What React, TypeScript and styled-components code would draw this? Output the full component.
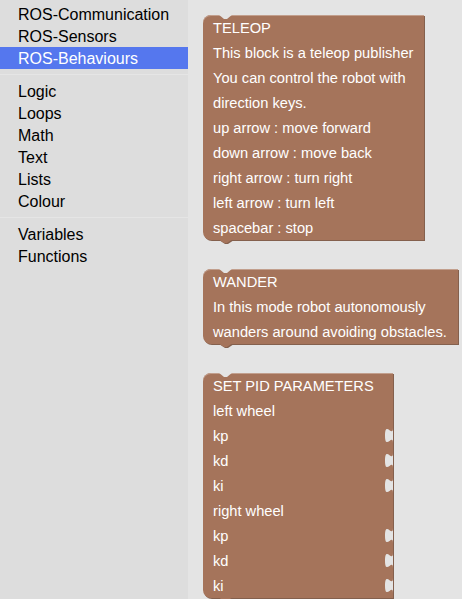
import React from 'react';
import styled, { createGlobalStyle } from 'styled-components';

const BLOCK = '#a5745b';
const BLOCK_DARK = '#84604d';
const BLOCK_LIGHT = '#c29f8d';
const FLYOUT = '#e4e4e4';

const GlobalStyle = createGlobalStyle`
  html, body {
    margin: 0;
    height: 100%;
    overflow: hidden;
  }
  body {
    font-family: 'Liberation Sans', Arial, sans-serif;
  }
  #root {
    height: 100%;
  }
`;

const Page = styled.div`
  display: flex;
  height: 100%;
`;

const Toolbox = styled.nav`
  flex: none;
  width: 188px;
  padding-top: 3px;
  box-sizing: border-box;
  background: #ddd;
`;

const Category = styled.div<{ $selected?: boolean }>`
  box-sizing: border-box;
  height: 22px;
  padding: 2px 0 0 18px;
  line-height: 20px;
  font-size: 16px;
  white-space: nowrap;
  color: ${(p) => (p.$selected ? '#fff' : '#000')};
  background: ${(p) => (p.$selected ? '#57e' : 'transparent')};
`;

const Separator = styled.div`
  height: 0;
  margin: 5px 0;
  border-bottom: 1px solid #e5e5e5;
`;

const Flyout = styled.main`
  flex: 1;
  display: flex;
  flex-direction: column;
  align-items: flex-start;
  gap: 29px;
  padding: 15px 0 0 15px;
  background: ${FLYOUT};
`;

const Block = styled.div<{ $width: number }>`
  position: relative;
  width: ${(p) => p.$width}px;
  background: ${BLOCK};
  border-radius: 8px 0 0 8px;
  box-shadow: 1px 1px 0 ${BLOCK_DARK}, inset 0 1px 0 ${BLOCK_LIGHT};
  color: #fff;
  font-size: 14.67px;
`;

const Row = styled.div`
  position: relative;
  box-sizing: border-box;
  height: 25px;
  padding: 2px 0 0 10px;
  line-height: 23px;
  white-space: nowrap;
`;

const TopNotch = styled.svg`
  position: absolute;
  top: 0;
  left: 15px;
  width: 15px;
  height: 5px;
`;

const BottomTab = styled.svg`
  position: absolute;
  bottom: -5px;
  left: 15px;
  width: 17px;
  height: 6px;
`;

const InputTab = styled.svg`
  position: absolute;
  top: 0;
  right: 0;
  width: 8px;
  height: 20px;
`;

type BlockDef = { width: number; rows: { text: string; input?: boolean }[] };

const blocks: BlockDef[] = [
  {
    width: 221,
    rows: [
      { text: 'TELEOP' },
      { text: 'This block is a teleop publisher' },
      { text: 'You can control the robot with' },
      { text: 'direction keys.' },
      { text: 'up arrow : move forward' },
      { text: 'down arrow : move back' },
      { text: 'right arrow : turn right' },
      { text: 'left arrow : turn left' },
      { text: 'spacebar : stop' },
    ],
  },
  {
    width: 255,
    rows: [
      { text: 'WANDER' },
      { text: 'In this mode robot autonomously' },
      { text: 'wanders around avoiding obstacles.' },
    ],
  },
  {
    width: 190,
    rows: [
      { text: 'SET PID PARAMETERS' },
      { text: 'left wheel' },
      { text: 'kp', input: true },
      { text: 'kd', input: true },
      { text: 'ki', input: true },
      { text: 'right wheel' },
      { text: 'kp', input: true },
      { text: 'kd', input: true },
      { text: 'ki', input: true },
    ],
  },
];

const categories: (string | null)[] = [
  'ROS-Communication',
  'ROS-Sensors',
  'ROS-Behaviours',
  null,
  'Logic',
  'Loops',
  'Math',
  'Text',
  'Lists',
  'Colour',
  null,
  'Variables',
  'Functions',
];

const App = () => (
  <>
    <GlobalStyle />
    <Page>
      <Toolbox>
        {categories.map((c, i) =>
          c ? (
            <Category key={i} $selected={c === 'ROS-Behaviours'}>
              {c}
            </Category>
          ) : (
            <Separator key={i} />
          )
        )}
      </Toolbox>
      <Flyout>
        {blocks.map((b, i) => (
          <Block key={i} $width={b.width}>
            <TopNotch viewBox='0 0 15 5'>
              <path d='M0,-1 L6,4 L9,4 L15,-1 Z' fill={FLYOUT} />
            </TopNotch>
            {b.rows.map((r, j) => (
              <Row key={j}>
                {r.text}
                {r.input && (
                  <InputTab viewBox='0 0 8 20'>
                    <path d='M8.5,0 L8,5 C8,15 0,-3 0,12.5 S8,10 8,20 L8.5,20 Z' fill={FLYOUT} />
                  </InputTab>
                )}
              </Row>
            ))}
            <BottomTab viewBox='0 0 17 6'>
              <path d='M1,1 L7,5 L10,5 L16,1 Z' fill={BLOCK_DARK} />
              <path d='M0,0 L6,4 L9,4 L15,0 Z' fill={BLOCK} />
            </BottomTab>
          </Block>
        ))}
      </Flyout>
    </Page>
  </>
);

export default App;
